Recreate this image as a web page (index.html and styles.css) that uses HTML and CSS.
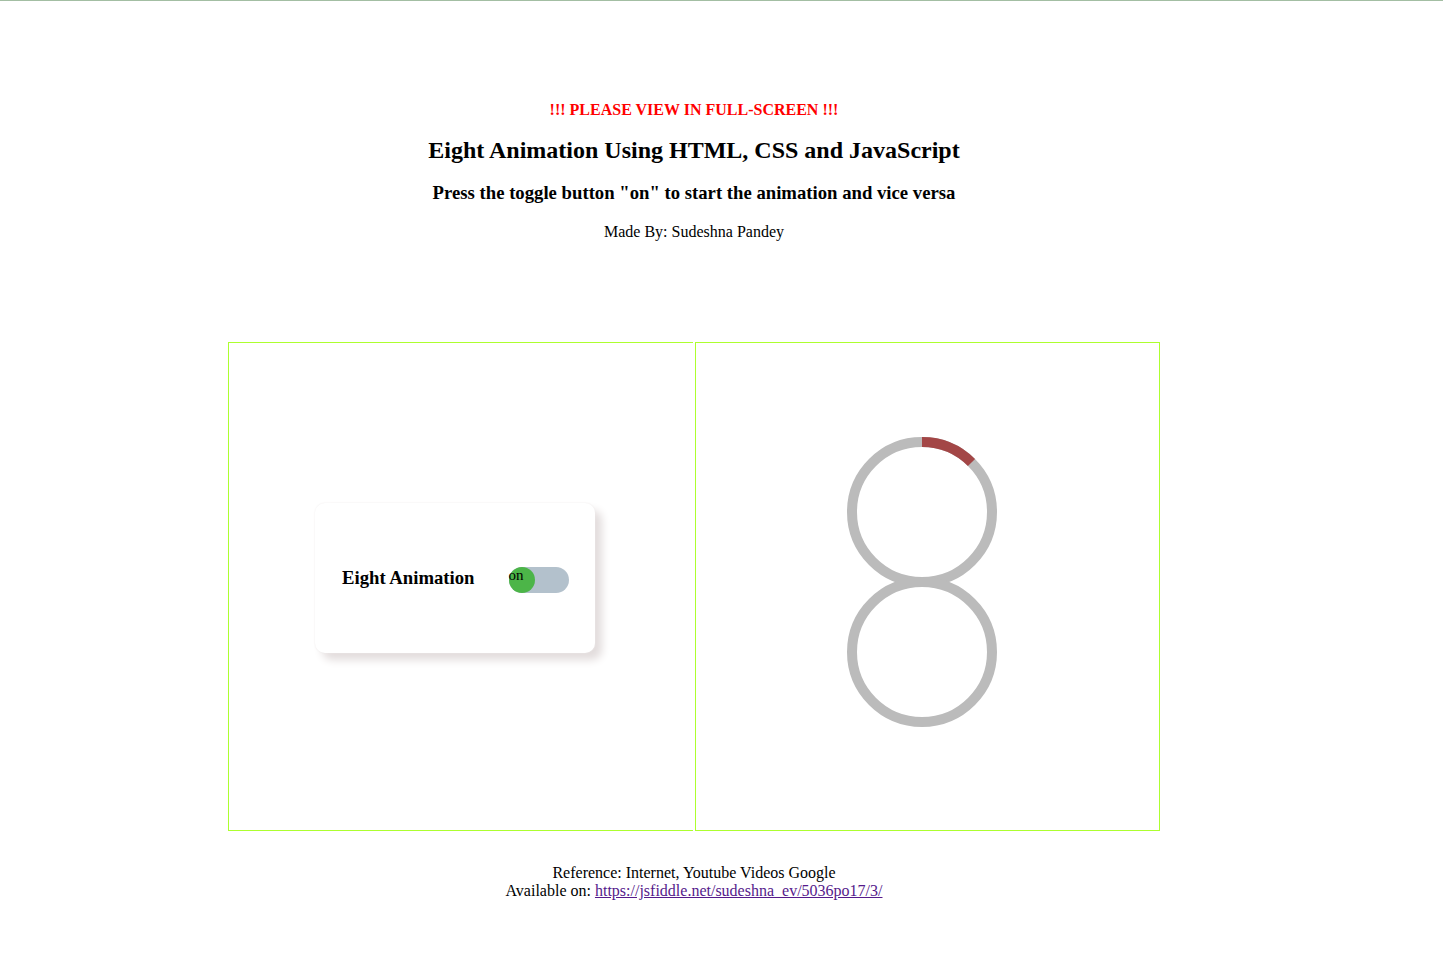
FILE: index.html
```html
<!DOCTYPE html>
<html lang="en">
<head>
<meta charset="utf-8">
<title>Eight Animation</title>
<link rel="stylesheet" href="styles.css">
</head>
<body>
<main class="page">
  <p class="warning">!!! PLEASE VIEW IN FULL-SCREEN !!!</p>
  <h1 class="title">Eight Animation Using HTML, CSS and JavaScript</h1>
  <h3 class="subtitle">Press the toggle button "on" to start the animation and vice versa</h3>
  <p class="author">Made By: Sudeshna Pandey</p>

  <div class="stage">
    <section class="panel panel-left">
      <div class="card">
        <span class="card-label">Eight Animation</span>
        <span class="toggle">
          <span class="knob"></span>
          <span class="toggle-text">on</span>
        </span>
      </div>
    </section>
    <section class="panel panel-right">
      <svg class="eight" width="160" height="300" viewBox="0 0 160 300">
        <circle cx="80" cy="80" r="70" fill="none" stroke="#bbbbbb" stroke-width="10"/>
        <circle cx="80" cy="220" r="70" fill="none" stroke="#bbbbbb" stroke-width="10"/>
        <path d="M 80 10 A 70 70 0 0 1 129.5 30.5" fill="none" stroke="#a34646" stroke-width="10"/>
      </svg>
    </section>
  </div>

  <footer class="credits">
    <div>Reference: Internet, Youtube Videos Google</div>
    <div>Available on: <a class="link" href="#">https://jsfiddle.net/sudeshna_ev/5036po17/3/</a></div>
  </footer>
</main>
</body>
</html>
```

FILE: styles.css
```css
html {
  border-top: 1px solid #a3bea3;
  background: #ffffff;
}

body {
  margin: 0 8px;
  font-family: "Liberation Serif", "Times New Roman", serif;
  color: #000;
}

.page {
  width: 1372px;
  padding-top: 99px;
  text-align: center;
}

.warning {
  margin: 0;
  font-size: 16px;
  line-height: 20px;
  font-weight: bold;
  color: #ff0000;
}

.title {
  margin: 15px 0 0;
  font-size: 24px;
  line-height: 30px;
  font-weight: bold;
}

.subtitle {
  margin: 17px 0 0;
  font-size: 18.72px;
  line-height: 22px;
  font-weight: bold;
}

.author {
  margin: 18px 0 0;
  font-size: 16px;
  line-height: 20px;
}

.stage {
  display: flex;
  gap: 2px;
  width: 932px;
  margin: 100px auto 0;
  text-align: left;
}

.panel {
  box-sizing: border-box;
  width: 465px;
  height: 489px;
  border: 1px solid #adff2f;
}

.panel-left {
  border-right: none;
  padding: 160px 0 0 86px;
}

.panel-right {
  padding: 89px 0 0 146px;
}

.card {
  box-sizing: border-box;
  width: 280px;
  height: 150px;
  border-radius: 10px;
  background: #fff;
  box-shadow: 0 0 2px #eeeaea, 7px 7px 8px #e2dcdc;
  display: flex;
  align-items: center;
  padding-left: 27px;
  gap: 34px;
}

.card-label {
  font-size: 18.72px;
  font-weight: bold;
}

.toggle {
  position: relative;
  display: block;
  width: 60px;
  height: 26px;
  border-radius: 13px;
  background: #b3c1cc;
  margin-top: 3px;
}

.knob {
  position: absolute;
  left: 0;
  top: 0;
  width: 26px;
  height: 26px;
  border-radius: 50%;
  background: #4cb548;
}

.toggle-text {
  position: absolute;
  left: 0;
  top: 0;
  font-size: 15px;
  line-height: 17px;
}

.eight {
  display: block;
}

.credits {
  margin-top: 33px;
  font-size: 16px;
  line-height: 18px;
}

.link {
  color: #551a8b;
  text-decoration: underline;
}
```
